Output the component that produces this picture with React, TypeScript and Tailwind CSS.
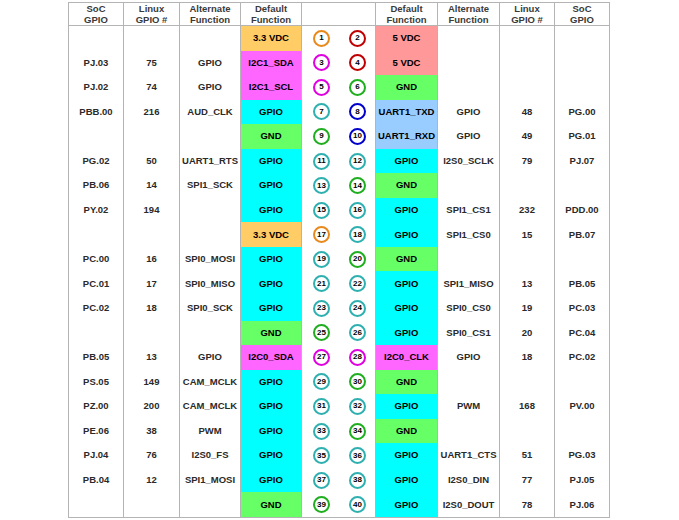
import React from 'react';

type Kind = 'v33' | 'v5' | 'i2c' | 'gpio' | 'gnd' | 'uart';

const fill: Record<Kind, string> = {
  v33: 'bg-[#ffcc66]',
  v5: 'bg-[#ff9999]',
  i2c: 'bg-[#ff66ff]',
  gpio: 'bg-[#00ffff]',
  gnd: 'bg-[#66ff66]',
  uart: 'bg-[#99ccff]',
};

const ring: Record<Kind, string> = {
  v33: 'border-[#e8891c]',
  v5: 'border-[#c00000]',
  i2c: 'border-[#e000e0]',
  gpio: 'border-[#2fb0b0]',
  gnd: 'border-[#1fae1f]',
  uart: 'border-[#0000cc]',
};

const label: Record<Kind, string> = {
  v33: '3.3 VDC',
  v5: '5 VDC',
  i2c: '',
  gpio: 'GPIO',
  gnd: 'GND',
  uart: '',
};

// [soc, linux, alt, kind, name?] per side
type Side = [string, string, string, Kind, string?];

const rows: [Side, Side][] = [
  [['', '', '', 'v33'], ['', '', '', 'v5']],
  [['PJ.03', '75', 'GPIO', 'i2c', 'I2C1_SDA'], ['', '', '', 'v5']],
  [['PJ.02', '74', 'GPIO', 'i2c', 'I2C1_SCL'], ['', '', '', 'gnd']],
  [['PBB.00', '216', 'AUD_CLK', 'gpio'], ['PG.00', '48', 'GPIO', 'uart', 'UART1_TXD']],
  [['', '', '', 'gnd'], ['PG.01', '49', 'GPIO', 'uart', 'UART1_RXD']],
  [['PG.02', '50', 'UART1_RTS', 'gpio'], ['PJ.07', '79', 'I2S0_SCLK', 'gpio']],
  [['PB.06', '14', 'SPI1_SCK', 'gpio'], ['', '', '', 'gnd']],
  [['PY.02', '194', '', 'gpio'], ['PDD.00', '232', 'SPI1_CS1', 'gpio']],
  [['', '', '', 'v33'], ['PB.07', '15', 'SPI1_CS0', 'gpio']],
  [['PC.00', '16', 'SPI0_MOSI', 'gpio'], ['', '', '', 'gnd']],
  [['PC.01', '17', 'SPI0_MISO', 'gpio'], ['PB.05', '13', 'SPI1_MISO', 'gpio']],
  [['PC.02', '18', 'SPI0_SCK', 'gpio'], ['PC.03', '19', 'SPI0_CS0', 'gpio']],
  [['', '', '', 'gnd'], ['PC.04', '20', 'SPI0_CS1', 'gpio']],
  [['PB.05', '13', 'GPIO', 'i2c', 'I2C0_SDA'], ['PC.02', '18', 'GPIO', 'i2c', 'I2C0_CLK']],
  [['PS.05', '149', 'CAM_MCLK', 'gpio'], ['', '', '', 'gnd']],
  [['PZ.00', '200', 'CAM_MCLK', 'gpio'], ['PV.00', '168', 'PWM', 'gpio']],
  [['PE.06', '38', 'PWM', 'gpio'], ['', '', '', 'gnd']],
  [['PJ.04', '76', 'I2S0_FS', 'gpio'], ['PG.03', '51', 'UART1_CTS', 'gpio']],
  [['PB.04', '12', 'SPI1_MOSI', 'gpio'], ['PJ.05', '77', 'I2S0_DIN', 'gpio']],
  [['', '', '', 'gnd'], ['PJ.06', '78', 'I2S0_DOUT', 'gpio']],
];

const cell = 'flex items-center justify-center border-r border-[#b4b4b4] text-center';

const Pin = ({ n, kind }: { n: number; kind: Kind }) => (
  <div
    className={`w-[17px] h-[17px] rounded-full border-[2.5px] ${ring[kind]} bg-white flex items-center justify-center text-[8px] leading-none text-black`}
  >
    {n}
  </div>
);

const Head = ({ a, b }: { a: string; b: string }) => (
  <div className={`${cell} flex-col leading-[11px] text-[#3a3a3a]`}>
    <span>{a}</span>
    <span>{b}</span>
  </div>
);

export default function App() {
  return (
    <div className="min-h-[520px] bg-white pt-[2px] pl-[68px] font-['Liberation_Sans',Arial,sans-serif] font-bold text-[9.5px] text-[#2a2a2a]">
      <div className="w-[542px] border-l border-t border-b border-[#b4b4b4] grid grid-cols-[55px_56px_61px_61px_74px_62px_62px_55px_55px]">
        <div className="contents">
          <Head a="SoC" b="GPIO" />
          <Head a="Linux" b="GPIO #" />
          <Head a="Alternate" b="Function" />
          <Head a="Default" b="Function" />
          <div className={cell} />
          <Head a="Default" b="Function" />
          <Head a="Alternate" b="Function" />
          <Head a="Linux" b="GPIO #" />
          <Head a="SoC" b="GPIO" />
        </div>
        <div className="col-span-9 border-b border-[#b4b4b4]" />
        {rows.map(([l, r], i) => (
          <div key={i} className="contents">
            <div className={`${cell} h-[24.55px]`}>{l[0]}</div>
            <div className={cell}>{l[1]}</div>
            <div className={cell}>{l[2]}</div>
            <div className={`${cell} ${fill[l[3]]} text-black`}>{l[4] ?? label[l[3]]}</div>
            <div className={`${cell} justify-start pl-[11px] gap-[19px]`}>
              <Pin n={i * 2 + 1} kind={l[3]} />
              <Pin n={i * 2 + 2} kind={r[3]} />
            </div>
            <div className={`${cell} ${fill[r[3]]} text-black`}>{r[4] ?? label[r[3]]}</div>
            <div className={cell}>{r[2]}</div>
            <div className={cell}>{r[1]}</div>
            <div className={cell}>{r[0]}</div>
          </div>
        ))}
      </div>
    </div>
  );
}
